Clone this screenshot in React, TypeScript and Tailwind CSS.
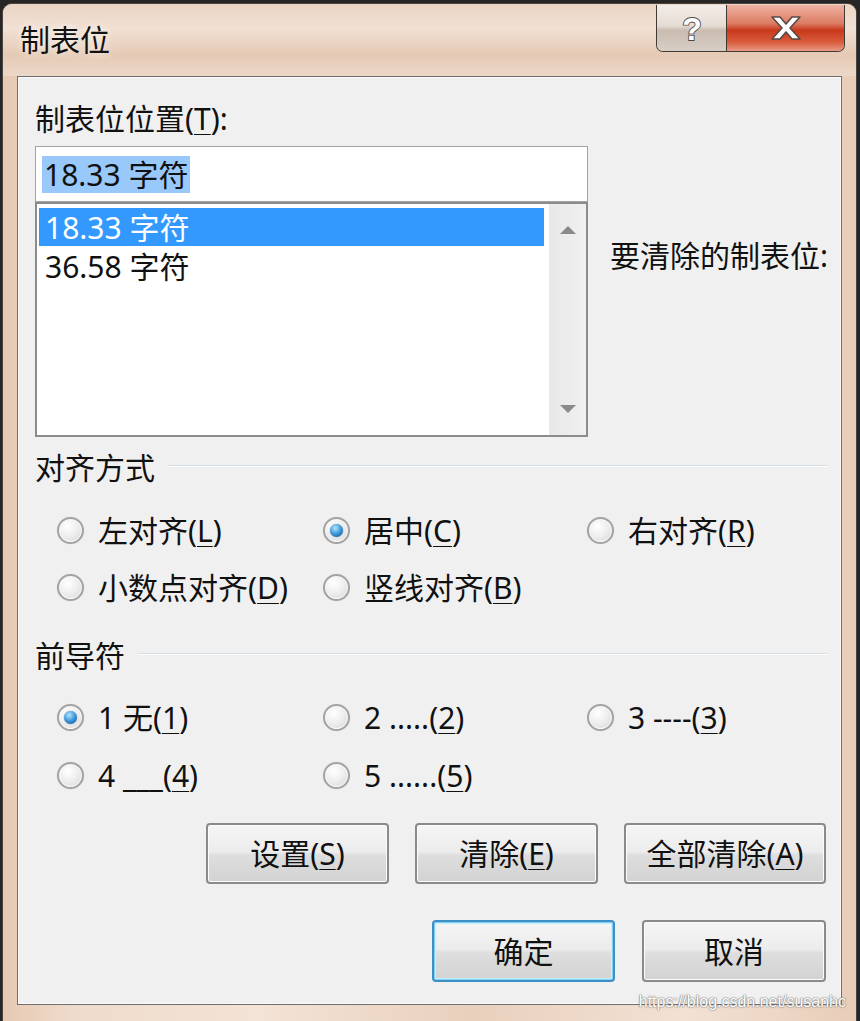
import React from "react";

function Radio({ checked }: { checked?: boolean }) {
  return (
    <span className="flex h-[27px] w-[27px] shrink-0 items-center justify-center rounded-full border-2 border-[#a3a3a3] bg-[radial-gradient(circle_at_38%_32%,#ffffff,#ededed_50%,#d2d2d2)] shadow-[inset_0_0_0_1px_#f7f7f7,0_0_1px_#c8c8c8]">
      {checked && (
        <span className="h-[13px] w-[13px] rounded-full bg-[radial-gradient(circle_at_40%_32%,#b4e6ff,#3b95da_50%,#0c4c88)] shadow-[0_0_1px_#0c3f70]" />
      )}
    </span>
  );
}

function Option({ checked, children }: { checked?: boolean; children: React.ReactNode }) {
  return (
    <div className="flex h-[40px] items-center gap-[14px]">
      <Radio checked={checked} />
      <span className="whitespace-nowrap">{children}</span>
    </div>
  );
}

function Mn({ children }: { children: React.ReactNode }) {
  return <span className="underline decoration-1 underline-offset-[4px]">{children}</span>;
}

function Btn({ w, def, children }: { w: string; def?: boolean; children: React.ReactNode }) {
  return (
    <div
      className={
        "flex items-center justify-center rounded-[4px] bg-[linear-gradient(#f5f5f5,#ececec_47%,#dedede_53%,#d2d2d2)] " +
        w +
        (def
          ? " border-2 border-[#3e8fc6] shadow-[inset_0_0_0_1px_#7fd4f5,inset_0_0_0_2px_#c6eefc]"
          : " border-2 border-[#8a8a8a] shadow-[inset_0_0_0_1px_#fbfbfb]")
      }
    >
      {children}
    </div>
  );
}

function Header({ children }: { children: React.ReactNode }) {
  return (
    <div className="flex h-[34px] items-center pl-[17px] pr-[14px]">
      <span className="whitespace-nowrap">{children}</span>
      <div className="ml-[13px] mt-[-3px] h-[2px] flex-1 border-t border-b border-t-[#d5dfe5] border-b-white" />
    </div>
  );
}

export default function App() {
  return (
    <div className="relative h-[1021px] w-[860px] overflow-hidden bg-[#262626] font-['Noto_Sans','Noto_Sans_CJK_SC',sans-serif] text-[30px] text-[#111]">
      <div className="ml-[2px] mt-[3px] flex h-[1030px] w-[855px] flex-col rounded-t-[10px] border border-[#4b4540] bg-[linear-gradient(90deg,#e7c9b2,#efdbcb_8%,#f3e3d6_30%,#e9d0bd_55%,#f2e1d4_80%,#e8cdb8)]">
        <div className="flex h-[72px] items-start justify-between rounded-t-[9px] bg-[linear-gradient(#ebd5c5,#f1e0d3_35%,#e5cab5_70%,#ecd8c8)] pl-[17px] pr-[11px]">
          <div className="mt-[16px] text-[30px] leading-[40px] text-[#111] [text-shadow:0_0_8px_#fff]">制表位</div>
          <div className="mt-[1px] flex h-[47px] overflow-hidden rounded-b-[7px] border border-t-0 border-[#3f3a36]">
            <div className="flex w-[70px] items-center justify-center border-r border-[#3f3a36] bg-[linear-gradient(#f3ece7,#e6dcd4_45%,#c9bbb0_55%,#d9cec5)]">
              <svg width="26" height="38" viewBox="0 0 26 38">
                <text
                  x="13"
                  y="31"
                  textAnchor="middle"
                  fontSize="32"
                  fontWeight="700"
                  fontFamily="Liberation Sans, sans-serif"
                  fill="#fff"
                  stroke="#4a4a4a"
                  strokeWidth="1.8"
                  paintOrder="stroke"
                >
                  ?
                </text>
              </svg>
            </div>
            <div className="flex w-[117px] items-center justify-center bg-[linear-gradient(#eeb2a2,#dc7c63_40%,#c8381a_55%,#d95a3c_80%,#e89b86)]">
              <svg width="34" height="26" viewBox="0 0 34 26">
                <path
                  d="M3 2h8l6 7 6-7h8l-10 11 10 11h-8l-6-7-6 7H3l10-11z"
                  fill="#fff"
                  stroke="#5a4a46"
                  strokeWidth="1.6"
                  strokeLinejoin="round"
                />
              </svg>
            </div>
          </div>
        </div>

        <div className="mx-[14px] flex h-[929px] flex-col border border-[#6e6e6e] bg-[#f0f0f0] shadow-[inset_0_0_0_1px_#fafafa]">
          <div className="mt-[24px] flex h-[34px] items-center pl-[17px]">
            制表位位置(<Mn>T</Mn>):
          </div>

          <div className="mt-[11px] flex pl-[17px]">
            <div className="flex w-[553px] flex-col">
              <div className="flex h-[56px] items-center border border-[#a3a3a3] bg-white px-[6px]">
                <span className="bg-[#99c9fb] px-[2px] leading-[37px]">18.33 字符</span>
              </div>
              <div className="flex h-[235px] border-2 border-[#8c8c8c] bg-white">
                <div className="flex flex-1 flex-col px-[2px] pt-[4px]">
                  <div className="flex h-[38px] items-center bg-[#3399ff] px-[6px] text-white">18.33 字符</div>
                  <div className="flex h-[40px] items-center px-[6px]">36.58 字符</div>
                </div>
                <div className="flex w-[40px] flex-col items-center justify-between border-l-[3px] border-white bg-[linear-gradient(90deg,#e8e8e8,#f0f0f0)] py-[21px]">
                  <svg width="18" height="10" viewBox="0 0 18 10">
                    <path d="M9 1L17 9H1z" fill="#8a8a8a" />
                  </svg>
                  <svg width="18" height="10" viewBox="0 0 18 10">
                    <path d="M1 1h16L9 9z" fill="#8a8a8a" />
                  </svg>
                </div>
              </div>
            </div>
            <div className="ml-[22px] mt-[92px] flex h-[34px] items-center whitespace-nowrap">要清除的制表位:</div>
          </div>

          <div className="mt-[13px]">
            <Header>对齐方式</Header>
          </div>
          <div className="mt-[26px] grid grid-cols-[266px_264px_1fr] gap-y-[17px] pl-[39px]">
            <Option>
              左对齐(<Mn>L</Mn>)
            </Option>
            <Option checked>
              居中(<Mn>C</Mn>)
            </Option>
            <Option>
              右对齐(<Mn>R</Mn>)
            </Option>
            <Option>
              小数点对齐(<Mn>D</Mn>)
            </Option>
            <Option>
              竖线对齐(<Mn>B</Mn>)
            </Option>
          </div>

          <div className="mt-[31px]">
            <Header>前导符</Header>
          </div>
          <div className="mt-[25px] grid grid-cols-[266px_264px_1fr] gap-y-[18px] pl-[39px]">
            <Option checked>
              1 无(<Mn>1</Mn>)
            </Option>
            <Option>
              2 .....(<Mn>2</Mn>)
            </Option>
            <Option>
              3 ----(<Mn>3</Mn>)
            </Option>
            <Option>
              4 ___(<Mn>4</Mn>)
            </Option>
            <Option>
              5 ......(<Mn>5</Mn>)
            </Option>
          </div>

          <div className="mt-[28px] flex h-[61px] justify-end gap-[26px] pr-[15px]">
            <Btn w="w-[183px]">
              设置(<Mn>S</Mn>)
            </Btn>
            <Btn w="w-[183px]">
              清除(<Mn>E</Mn>)
            </Btn>
            <Btn w="w-[202px]">
              全部清除(<Mn>A</Mn>)
            </Btn>
          </div>
          <div className="mt-[36px] flex h-[62px] justify-end gap-[27px] pr-[15px]">
            <Btn w="w-[183px]" def>
              确定
            </Btn>
            <Btn w="w-[184px]">取消</Btn>
          </div>
        </div>
      </div>
      <div className="absolute bottom-[7px] right-[14px] font-['Liberation_Sans',sans-serif] text-[16px] text-white [text-shadow:0_0_2px_#777,0_0_1px_#555]">
        https://blog.csdn.net/susanhc
      </div>
    </div>
  );
}
